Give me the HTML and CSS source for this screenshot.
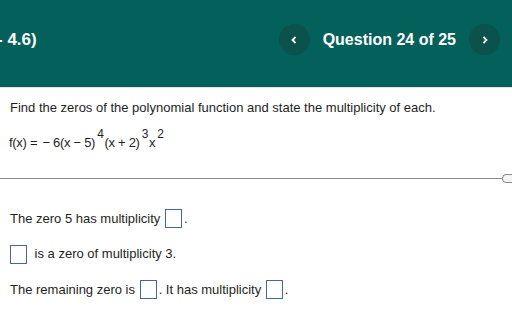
FILE: index.html
```html
<!DOCTYPE html>
<html>
<head>
<meta charset="utf-8">
<link rel="stylesheet" href="styles.css">
</head>
<body>
<header class="top">
  <div class="title">- 4.6)</div>
  <nav class="nav">
    <span class="navbtn"><svg width="10" height="10" viewBox="0 0 10 10"><path d="M6.5 2 L3.5 5 L6.5 8" fill="none" stroke="#fff" stroke-width="1.8"/></svg></span>
    <span class="qnum">Question 24 of 25</span>
    <span class="navbtn"><svg width="10" height="10" viewBox="0 0 10 10"><path d="M3.5 2 L6.5 5 L3.5 8" fill="none" stroke="#fff" stroke-width="1.8"/></svg></span>
  </nav>
</header>
<main class="content">
  <p class="prompt">Find the zeros of the polynomial function and state the multiplicity of each.</p>
  <p class="formula">f(x) = <span class="minus">−</span> 6(x − 5)<sup>4</sup>(x + 2)<sup>3</sup>x<sup>2</sup></p>
  <div class="divider"><span class="rule"></span><span class="handle"></span></div>
  <div class="answers">
    <p class="ans">The zero 5 has multiplicity <span class="box"></span>.</p>
    <p class="ans"><span class="box first"></span> is a zero of multiplicity 3.</p>
    <p class="ans">The remaining zero is <span class="box"></span>. It has multiplicity <span class="box"></span>.</p>
  </div>
</main>
</body>
</html>
```
FILE: styles.css
```css
html, body {
  margin: 0;
  padding: 0;
  background: #fff;
  font-family: "Liberation Sans", Arial, sans-serif;
  overflow: hidden;
}
.top {
  box-sizing: border-box;
  height: 88px;
  padding-bottom: 8px;
  background: #03605a;
  border-bottom: 1px solid #dce6e6;
  display: flex;
  align-items: center;
  justify-content: space-between;
  color: #fff;
}
.title {
  font-size: 17px;
  font-weight: bold;
  margin-left: -3px;
}
.nav {
  display: flex;
  align-items: center;
  margin-right: 12px;
}
.navbtn {
  width: 31px;
  height: 31px;
  border-radius: 50%;
  background: #0b524c;
  display: flex;
  align-items: center;
  justify-content: center;
}
.qnum {
  font-size: 16px;
  font-weight: bold;
  margin: 0 13px 0 13px;
}
.content {
  color: #1e1e1e;
  font-size: 13px;
}
.prompt {
  margin: 12px 0 0 10px;
  line-height: 16px;
}
.formula {
  margin: 18px 0 0 9px;
  line-height: 16px;
  letter-spacing: -0.3px;
}
.formula .minus { margin-left: 2px; }
.formula sup {
  font-size: 12px;
  vertical-align: 9px;
  line-height: 0;
  margin: 0 1px 0 2px;
}
.divider {
  display: flex;
  align-items: center;
  margin-top: 23px;
}
.rule {
  flex: 1;
  height: 1px;
  background: #8a8a8a;
}
.handle {
  width: 14px;
  height: 7px;
  border: 1px solid #8a8a8a;
  border-right: none;
  border-radius: 5px 0 0 5px;
  background: #f4f4f4;
  margin-right: -5px;
}
.answers {
  padding-top: 18px;
}
.ans {
  margin: 0 0 0 10px;
  height: 35.5px;
  line-height: 18px;
  display: flex;
  align-items: center;
  white-space: pre;
}
.box {
  display: inline-block;
  width: 15px;
  height: 17px;
  border: 1px solid #4466a8;
  margin: 0 2px 0 1px;
}
.box.first { margin: 0 4px 0 0; }
```
